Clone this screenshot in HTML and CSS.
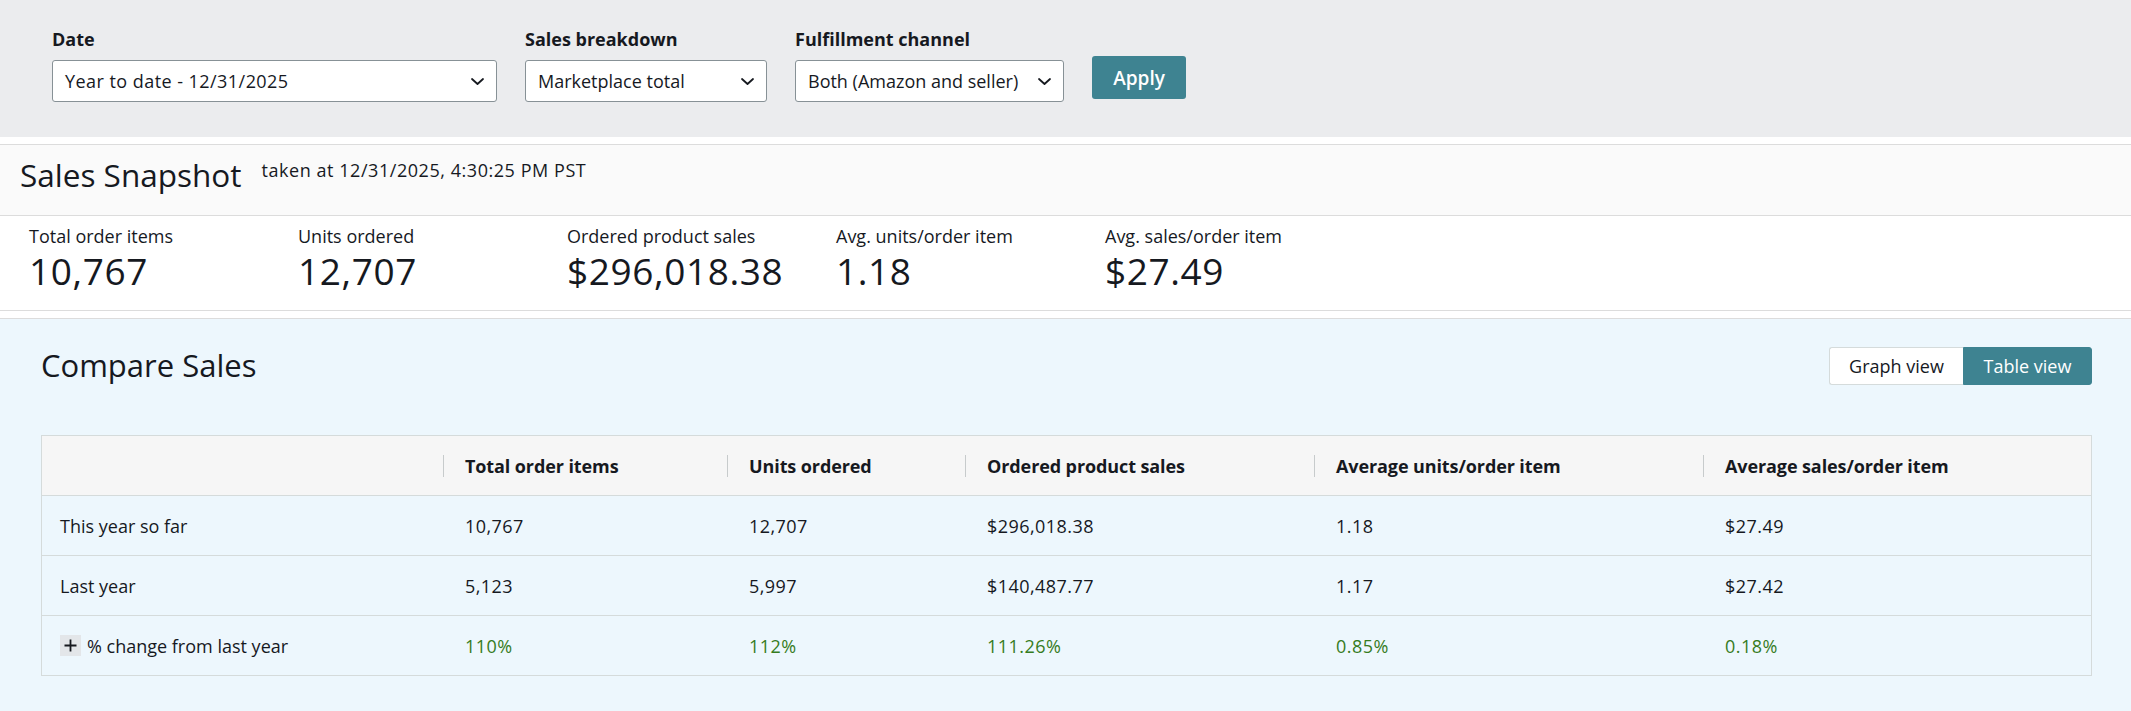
FILE: index.html
```html
<!DOCTYPE html>
<html lang="en">
<head>
<meta charset="utf-8">
<title>Sales Dashboard</title>
<link rel="stylesheet" href="styles.css">
</head>
<body>
<div class="filters">
  <div class="field field-date">
    <div class="field-label">Date</div>
    <div class="select">
      <span class="num">Year to date - 12/31/2025</span>
      <svg class="chev" viewBox="0 0 13 7" width="13" height="7"><path d="M1 1 L6.5 6 L12 1" fill="none" stroke="#16191f" stroke-width="1.8" stroke-linecap="round" stroke-linejoin="round"/></svg>
    </div>
  </div>
  <div class="field field-breakdown">
    <div class="field-label">Sales breakdown</div>
    <div class="select">
      <span>Marketplace total</span>
      <svg class="chev" viewBox="0 0 13 7" width="13" height="7"><path d="M1 1 L6.5 6 L12 1" fill="none" stroke="#16191f" stroke-width="1.8" stroke-linecap="round" stroke-linejoin="round"/></svg>
    </div>
  </div>
  <div class="field field-channel">
    <div class="field-label">Fulfillment channel</div>
    <div class="select">
      <span>Both (Amazon and seller)</span>
      <svg class="chev" viewBox="0 0 13 7" width="13" height="7"><path d="M1 1 L6.5 6 L12 1" fill="none" stroke="#16191f" stroke-width="1.8" stroke-linecap="round" stroke-linejoin="round"/></svg>
    </div>
  </div>
  <button class="apply">Apply</button>
</div>

<div class="snapshot-head">
  <h1 class="snapshot-title">Sales Snapshot</h1>
  <span class="snapshot-time">taken at 12/31/2025, 4:30:25 PM PST</span>
</div>

<div class="metrics">
  <div class="metric"><div class="metric-label">Total order items</div><div class="metric-value">10,767</div></div>
  <div class="metric"><div class="metric-label">Units ordered</div><div class="metric-value">12,707</div></div>
  <div class="metric"><div class="metric-label">Ordered product sales</div><div class="metric-value">$296,018.38</div></div>
  <div class="metric"><div class="metric-label">Avg. units/order item</div><div class="metric-value">1.18</div></div>
  <div class="metric"><div class="metric-label">Avg. sales/order item</div><div class="metric-value">$27.49</div></div>
</div>

<div class="compare">
  <div class="compare-head">
    <h2 class="compare-title">Compare Sales</h2>
    <div class="toggle">
      <button class="toggle-btn">Graph view</button>
      <button class="toggle-btn active">Table view</button>
    </div>
  </div>

  <div class="table">
    <div class="row head">
      <div class="cell first"></div>
      <div class="cell sep">Total order items</div>
      <div class="cell sep">Units ordered</div>
      <div class="cell sep">Ordered product sales</div>
      <div class="cell sep">Average units/order item</div>
      <div class="cell sep">Average sales/order item</div>
    </div>
    <div class="row">
      <div class="cell first">This year so far</div>
      <div class="cell num">10,767</div>
      <div class="cell num">12,707</div>
      <div class="cell num">$296,018.38</div>
      <div class="cell num">1.18</div>
      <div class="cell num">$27.49</div>
    </div>
    <div class="row">
      <div class="cell first">Last year</div>
      <div class="cell num">5,123</div>
      <div class="cell num">5,997</div>
      <div class="cell num">$140,487.77</div>
      <div class="cell num">1.17</div>
      <div class="cell num">$27.42</div>
    </div>
    <div class="row last">
      <div class="cell first"><span class="expand"><svg viewBox="0 0 21 21" width="21" height="21"><path d="M10.5 4.5 V16.5 M4.5 10.5 H16.5" stroke="#16191f" stroke-width="1.8" fill="none"/></svg></span>% change from last year</div>
      <div class="cell num green">110%</div>
      <div class="cell num green">112%</div>
      <div class="cell num green">111.26%</div>
      <div class="cell num green">0.85%</div>
      <div class="cell num green">0.18%</div>
    </div>
  </div>
</div>
</body>
</html>
```

FILE: styles.css
```css
* { box-sizing: border-box; }
html, body { margin: 0; padding: 0; }
body {
  font-family: "Open Sans", "Noto Sans", sans-serif;
  color: #16191f;
  background: #ffffff;
  width: 2131px;
  height: 711px;
  overflow: hidden;
}
.num { letter-spacing: 0.45px; }

/* Filters */
.filters {
  background: #ebecee;
  height: 137px;
  padding: 27px 0 0 52px;
  display: flex;
  align-items: flex-start;
  gap: 28px;
}
.field-label {
  font-size: 18px;
  font-weight: 700;
  line-height: 24px;
  margin-bottom: 9px;
}
.select {
  height: 42px;
  background: #fff;
  border: 1px solid #879196;
  border-radius: 3px;
  display: flex;
  align-items: center;
  justify-content: space-between;
  padding: 0 12px 0 12px;
  font-size: 18px;
}
.field-date .select { width: 445px; }
.field-breakdown .select { width: 242px; }
.field-channel .select { width: 269px; }
.chev { display: block; }
.apply {
  margin-top: 29px;
  width: 94px;
  height: 43px;
  background: #3e8391;
  color: #fff;
  border: none;
  border-radius: 3px;
  font-family: inherit;
  font-size: 19px;
  font-weight: 600;
  padding: 0;
}

/* Snapshot */
.snapshot-head {
  margin-top: 7px;
  border-top: 1px solid #dcdcdc;
  border-bottom: 1px solid #dcdcdc;
  background: #fafafa;
  height: 72px;
  padding: 12px 0 0 20px;
  display: flex;
  align-items: flex-start;
  gap: 20px;
}
.snapshot-title {
  margin: 0;
  font-size: 31.5px;
  font-weight: 400;
  line-height: 36px;
}
.snapshot-time {
  font-size: 18px;
  line-height: 24px;
  margin-top: 1px;
  letter-spacing: 0.55px;
}

.metrics {
  height: 95px;
  border-bottom: 1px solid #dcdcdc;
  padding: 9px 0 0 29px;
  display: flex;
}
.metric { width: 269px; }
.metric-label { font-size: 18px; line-height: 22px; }
.metric-value { font-size: 37px; line-height: 40px; margin-top: 4px; letter-spacing: 0.6px; }

/* Compare */
.compare {
  margin-top: 7px;
  border-top: 1px solid #dcdcdc;
  background: #edf7fd;
  height: 393px;
  padding: 28px 39px 0 41px;
}
.compare-head {
  display: flex;
  justify-content: space-between;
  align-items: flex-start;
  height: 88px;
}
.compare-title {
  margin: 0;
  font-size: 31px;
  font-weight: 400;
  line-height: 36px;
}
.toggle { display: flex; height: 38px; }
.toggle-btn {
  font-family: inherit;
  font-size: 18px;
  height: 38px;
  padding: 0;
  border: 1px solid #d5dbdb;
  background: #fff;
  color: #16191f;
}
.toggle-btn:first-child { width: 134px; border-radius: 3px 0 0 3px; border-right: none; }
.toggle-btn.active { width: 129px; background: #3e8391; border-color: #3e8391; color: #fff; border-radius: 0 3px 3px 0; }

.table {
  border: 1px solid #d5dbdb;
}
.row {
  display: grid;
  grid-template-columns: 401px 284px 238px 349px 389px 1fr;
  height: 60px;
  border-top: 1px solid #d5dbdb;
  align-items: center;
  font-size: 18px;
}
.row.head {
  border-top: none;
  height: 59px;
  background: #f6f6f6;
  font-weight: 700;
  letter-spacing: -0.1px;
}
.cell {
  padding-left: 22px;
  position: relative;
  white-space: nowrap;
  display: flex;
  align-items: center;
}
.cell.first { padding-left: 18px; }
.cell.sep::before {
  content: "";
  position: absolute;
  left: 0;
  top: 50%;
  margin-top: -11px;
  height: 22px;
  width: 1px;
  background: #c7cbcc;
}
.green { color: #367c1e; }
.expand {
  display: inline-flex;
  width: 21px;
  height: 21px;
  background: #e3e6e9;
  margin-right: 6px;
}
.expand svg { display: block; }
```
